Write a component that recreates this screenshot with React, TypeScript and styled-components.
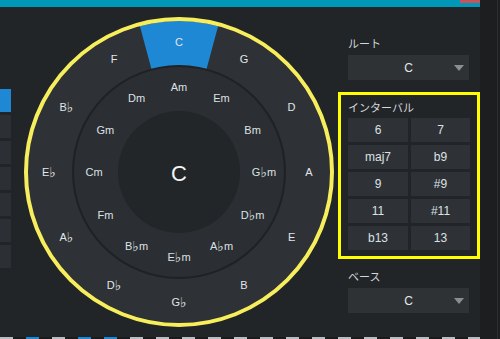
import styled, { createGlobalStyle } from "styled-components";

const GlobalStyle = createGlobalStyle`
    html, body {
        margin: 0;
        padding: 0;
        background: #222528;
        overflow: hidden;
    }
    * {
        box-sizing: border-box;
    }
`

const Frame = styled.div`
    width: 500px;
    height: 339px;
    display: flex;
    background: #222528;
    font-family: "Liberation Sans", "DejaVu Sans", "Noto Sans CJK JP", sans-serif;
    color: #d6dade;
`

const Main = styled.div`
    width: 480px;
    display: flex;
    flex-direction: column;
`

const TopBar = styled.div`
    height: 7px;
    background: #0098b9;
    display: flex;
    justify-content: flex-end;
    .rec {
        width: 20px;
        height: 3px;
        background: #c8545b;
    }
`

const Content = styled.div`
    flex: 1;
    display: flex;
    align-items: flex-start;
`

const Tabs = styled.div`
    width: 12px;
    padding-top: 82px;
    display: flex;
    flex-direction: column;
    gap: 3px;
`

const Tab = styled.div<{ $active?: boolean }>`
    height: 23px;
    background: ${p => p.$active ? '#1f88d4' : '#2c3034'};
`

const Wheel = styled.svg`
    margin-left: 8px;
    margin-top: 5px;
    flex-shrink: 0;
    font-family: "Liberation Sans", "DejaVu Sans", sans-serif;
`

const Panel = styled.div`
    width: 142px;
    margin-left: -1px;
    padding-top: 29px;
    display: flex;
    flex-direction: column;
`

const Section = styled.div`
    padding: 0 11px 0 10px;
`

const Label = styled.div`
    font-family: "Noto Sans CJK JP", sans-serif;
    font-size: 11px;
    line-height: 14px;
    height: 14px;
    margin-bottom: 5px;
    color: #d4d8dc;
`

const Select = styled.div`
    height: 25px;
    background: #2f3235;
    display: flex;
    align-items: center;
    justify-content: center;
    position: relative;
    font-size: 12px;
    color: #e4e8ec;
    .arrow {
        position: absolute;
        right: 5px;
        top: 10px;
        width: 0;
        height: 0;
        border-left: 5px solid transparent;
        border-right: 5px solid transparent;
        border-top: 6px solid #8a8e92;
    }
`

const IntervalBox = styled.div`
    margin: 12px 0 10px;
    border: 3px solid #ffff00;
    padding: 5px 8px 6px 7px;
    ${Label} {
        margin-bottom: 4px;
    }
`

const Grid = styled.div`
    display: grid;
    grid-template-columns: 60px 59px;
    grid-auto-rows: 24px;
    gap: 3px 3px;
`

const Cell = styled.div`
    background: #2e3236;
    display: flex;
    align-items: center;
    justify-content: center;
    font-size: 12px;
    color: #dde1e5;
`

const SideStrip = styled.div`
    width: 20px;
    background: #1d1e20;
    display: flex;
    justify-content: flex-end;
    padding-right: 2px;
    .line {
        width: 1px;
        background: #2b2d30;
    }
`

const Keys = styled.div`
    height: 2px;
    margin-top: auto;
    display: flex;
`

const Key = styled.div<{ $color: string }>`
    width: 13px;
    flex-shrink: 0;
    background: ${p => p.$color};
`

const majors = ['C', 'G', 'D', 'A', 'E', 'B', 'G♭', 'D♭', 'A♭', 'E♭', 'B♭', 'F']
const minors = ['Am', 'Em', 'Bm', 'G♭m', 'D♭m', 'A♭m', 'E♭m', 'B♭m', 'Fm', 'Cm', 'Gm', 'Dm']
const intervals = ['6', '7', 'maj7', 'b9', '9', '#9', '11', '#11', 'b13', '13']
const keyColors = ['#b9bdc1', '#1a1b1d', '#1f88d4', '#1a1b1d', '#b9bdc1', '#1a1b1d', '#1f88d4', '#1a1b1d', '#1f88d4', '#1a1b1d',
    '#b9bdc1', '#1a1b1d', '#b9bdc1', '#1a1b1d', '#b9bdc1', '#1a1b1d', '#b9bdc1', '#1a1b1d', '#b9bdc1', '#1a1b1d',
    '#b9bdc1', '#1a1b1d', '#b9bdc1', '#1a1b1d', '#b9bdc1', '#1a1b1d', '#b9bdc1', '#1a1b1d', '#b9bdc1', '#1a1b1d',
    '#b9bdc1', '#1a1b1d', '#b9bdc1', '#1a1b1d', '#b9bdc1', '#1a1b1d', '#b9bdc1']

const CX = 160
const CY = 160

function pt(r: number, deg: number) {
    const a = deg * Math.PI / 180
    return [CX + r * Math.sin(a), CY - r * Math.cos(a)]
}

function sector(r1: number, r2: number, from: number, to: number) {
    const [ax, ay] = pt(r2, from)
    const [bx, by] = pt(r2, to)
    const [cx, cy] = pt(r1, to)
    const [dx, dy] = pt(r1, from)
    return `M${ax} ${ay} A${r2} ${r2} 0 0 1 ${bx} ${by} L${cx} ${cy} A${r1} ${r1} 0 0 0 ${dx} ${dy} Z`
}

// 「♭」はフォントによって小さく出るので DejaVu で少し大きめに
function ChordName({ name, x, y, color }: { name: string, x: number, y: number, color: string }) {
    const parts = name.split('♭')
    return (
        <text x={x} y={y} fontSize={11} fill={color} textAnchor="middle" dominantBaseline="central">
            {parts[0]}
            {parts.length > 1 && <tspan fontFamily="DejaVu Sans" fontSize={14}>♭</tspan>}
            {parts.length > 1 && parts[1]}
        </text>
    )
}

function CircleOfFifths() {
    return (
        <Wheel width={320} height={320} viewBox="0 0 320 320">
            <circle cx={CX} cy={CY} r={151} fill="#2e3135" />
            <path d={sector(106, 151, -15, 15)} fill="#1f88d4" />
            <circle cx={CX} cy={CY} r={106} fill="#2b2e32" stroke="#1f2225" strokeWidth={2} />
            <circle cx={CX} cy={CY} r={61} fill="#232629" />
            <circle cx={CX} cy={CY} r={153} fill="none" stroke="#f6ee5c" strokeWidth={4} />
            {
                majors.map((name, i) => {
                    const [x, y] = pt(130, i * 30)
                    return <ChordName key={name} name={name} x={x} y={y} color="#e2e6ea" />
                })
            }
            {
                minors.map((name, i) => {
                    const [x, y] = pt(85, i * 30)
                    return <ChordName key={name} name={name} x={x} y={y} color="#dde1e5" />
                })
            }
            <text x={CX} y={CY + 1} fontSize={22} fill="#f2f4f6" textAnchor="middle" dominantBaseline="central">C</text>
        </Wheel>
    )
}

export default function App() {
    return (
        <Frame>
            <GlobalStyle />
            <Main>
                <TopBar><div className="rec" /></TopBar>
                <Content>
                    <Tabs>
                        <Tab $active />
                        {[1, 2, 3, 4, 5, 6].map(i => <Tab key={i} />)}
                    </Tabs>
                    <CircleOfFifths />
                    <Panel>
                        <Section>
                            <Label>ルート</Label>
                            <Select>C<span className="arrow" /></Select>
                        </Section>
                        <IntervalBox>
                            <Label>インターバル</Label>
                            <Grid>
                                {intervals.map(v => <Cell key={v}>{v}</Cell>)}
                            </Grid>
                        </IntervalBox>
                        <Section>
                            <Label>ベース</Label>
                            <Select>C<span className="arrow" /></Select>
                        </Section>
                    </Panel>
                </Content>
                <Keys>
                    {keyColors.map((c, i) => <Key key={i} $color={c} />)}
                </Keys>
            </Main>
            <SideStrip><div className="line" /></SideStrip>
        </Frame>
    )
}
